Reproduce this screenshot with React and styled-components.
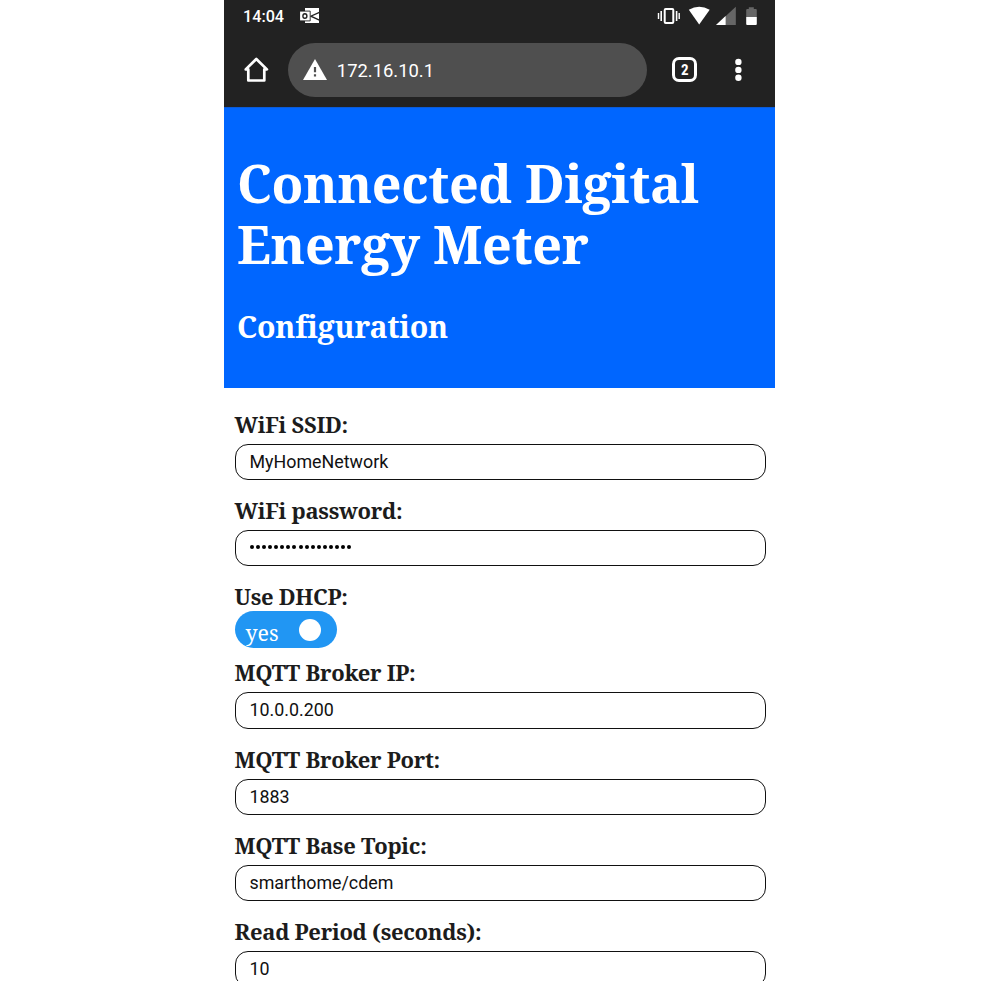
import React from "react";
import styled, { createGlobalStyle } from "styled-components";

const GlobalStyle = createGlobalStyle`
  * { box-sizing: border-box; }
  body { margin: 0; background: #fff; overflow: hidden; }
`;

const serif = `"Noto Serif", "Droid Serif", "DejaVu Serif Condensed", "DejaVu Serif", serif`;

const Phone = styled.main`
  width: 551px;
  height: 981px;
  margin: 0 auto 0 224px;
  overflow: hidden;
  background: #fff;
  font-family: Roboto, sans-serif;
`;

const Chrome = styled.header`
  height: 107px;
  background: #222;
  color: #fff;
`;

const StatusBar = styled.div`
  height: 33px;
  padding: 0 17px 0 19px;
  display: flex;
  align-items: center;
`;

const Clock = styled.span`
  width: 57px;
  font-size: 16.2px;
  font-weight: 500;
  line-height: 33px;
`;

const StatusIcons = styled.div`
  margin-left: auto;
  display: flex;
`;

const Toolbar = styled.div`
  height: 74px;
  padding: 10px 24px 10px 20px;
  display: flex;
  align-items: center;
`;

const AddressBar = styled.div`
  width: 359px;
  height: 54px;
  margin: 0 25px 0 19.3px;
  padding: 0 15px;
  display: flex;
  align-items: center;
  gap: 9.5px;
  border-radius: 27px;
  background: #4f4f4f;
`;

const Address = styled.span`
  font-size: 18.4px;
  line-height: 54px;
  padding-top: 1px;
`;

const TabCount = styled.div`
  width: 25px;
  height: 25px;
  margin: 0 36.5px 1px 0;
  display: grid;
  place-items: center;
  border: 3px solid #fff;
  border-radius: 7px;
  font: 700 15px/18px "Roboto Condensed", Roboto, sans-serif;
`;

const Banner = styled.section`
  height: 281px;
  padding: 44.4px 13px 0;
  background: #0066ff;
  border-top: 1px solid #0b5bd8;
  color: #fff;
  font-family: ${serif};
`;

const Title = styled.h1`
  margin: 0;
  font-size: 52px;
  font-weight: 700;
  line-height: 61px;
  letter-spacing: -0.34px;
`;

const Subtitle = styled.h2`
  margin: 33px 0 0;
  font-size: 30.2px;
  font-weight: 700;
  line-height: 40px;
  letter-spacing: -0.2px;
`;

const Form = styled.form`
  padding: 21.7px 9px 0 10.5px;
`;

const Field = styled.div`
  height: ${(p) => (p.$compact ? 76.4 : 86.2)}px;
`;

const Label = styled.label`
  display: block;
  height: ${(p) => (p.$compact ? 29 : 34)}px;
  color: #1c1c1c;
  font: 700 22px/28.6px ${serif};
  letter-spacing: -0.27px;
  white-space: nowrap;
`;

const Input = styled.div`
  height: 36.4px;
  padding: 0 14px;
  border: 1px solid #111;
  border-radius: 13px;
  color: #111;
  font-size: 17.85px;
  line-height: 34px;
`;

const Dots = styled.div`
  height: 32px;
  display: flex;
  align-items: center;
  gap: 2.07px;
  padding-left: 0.5px;

  i {
    width: 4px;
    height: 4px;
    border-radius: 50%;
    background: #000;
  }
`;

const Toggle = styled.div`
  width: 102px;
  height: 37px;
  padding: 0 16px 0 11px;
  display: flex;
  align-items: center;
  justify-content: space-between;
  border-radius: 18.5px;
  background: #2196f3;
  color: #fff;
  font: 400 21.3px/28px ${serif};
`;

const ToggleText = styled.span`
  padding-top: 7px;
`;

const Knob = styled.span`
  width: 22px;
  height: 22px;
  margin-top: 1px;
  border-radius: 50%;
  background: #fff;
`;

const fields = [
  { label: "WiFi SSID:", value: "MyHomeNetwork" },
  { label: "WiFi password:", masked: 17 },
  { label: "Use DHCP:", toggle: "yes" },
  { label: "MQTT Broker IP:", value: "10.0.0.200" },
  { label: "MQTT Broker Port:", value: "1883" },
  { label: "MQTT Base Topic:", value: "smarthome/cdem" },
  { label: "Read Period (seconds):", value: "10" },
];

const OutlookIcon = () => (
  <svg width="20" height="17" viewBox="0 0 20 17">
    <path d="M5 0h14v15H5z" fill="#fff" />
    <path d="M19.4 4.4L10.8 8.2L19.4 12.2" fill="none" stroke="#222" strokeWidth="1.3" />
    <path d="M-.4 3.1h10.6v9.8H-.4z" fill="#fff" stroke="#222" strokeWidth=".9" />
    <ellipse cx="4.9" cy="8" rx="2" ry="2.3" fill="none" stroke="#222" strokeWidth="1.4" />
  </svg>
);

const PhoneStatus = () => (
  <svg width="102" height="23" viewBox="656 5 102 23" fill="#fff">
    <path d="M657.8 13h1.4v6h-1.4zM660.4 11h1.6v10h-1.6zM675.8 11h1.6v10h-1.6zM678.5 13h1.4v6h-1.4z" />
    <rect x="664.7" y="8.9" width="8.6" height="14.2" rx="1" fill="none" stroke="#fff" strokeWidth="2" />
    <path d="M688.8 9.7Q699.2 3.9 709.7 9.7L699.2 24.6z" />
    <path d="M735.8 6.8V24.9H716z" fill="#666" />
    <path d="M725.6 16V24.9H716z" />
    <path d="M746.2 10q0-1 1-1h1.6V7.2h5V9h2q1 0 1 1v7h-10.6z" fill="#666" />
    <path d="M746.2 16.9h10.6V24q0 1-1 1h-8.6q-1 0-1-1z" />
  </svg>
);

const HomeIcon = () => (
  <svg width="25" height="26" viewBox="0 0 25 26" fill="none" stroke="#fff" strokeWidth="2.7" strokeLinejoin="round">
    <path d="M4.3 12.4H1.7L12.3 2L22.9 12.4H20.3V23.5H4.3z" />
  </svg>
);

const WarningIcon = () => (
  <svg width="24" height="23" viewBox="0 0 24 23">
    <path d="M12 0L24 21H0z" fill="#fff" />
    <path d="M10.9 8h2.2v5.2h-2.2zM10.9 15.2h2.2v2.3h-2.2z" fill="#4f4f4f" />
  </svg>
);

const MenuIcon = () => (
  <svg width="8" height="24" viewBox="0 0 8 24" fill="#fff">
    <circle cx="4.4" cy="3.9" r="3.2" />
    <circle cx="4.4" cy="11.9" r="3.2" />
    <circle cx="4.4" cy="19.8" r="3.2" />
  </svg>
);

function FieldControl({ field }) {
  if (field.toggle) {
    return (
      <Toggle role="switch" aria-checked="true">
        <ToggleText>{field.toggle}</ToggleText>
        <Knob />
      </Toggle>
    );
  }
  if (field.masked) {
    return (
      <Input>
        <Dots>
          {Array.from({ length: field.masked }, (_, i) => (
            <i key={i} />
          ))}
        </Dots>
      </Input>
    );
  }
  return <Input>{field.value}</Input>;
}

export default function App() {
  return (
    <>
      <GlobalStyle />
      <Phone>
        <Chrome>
          <StatusBar>
            <Clock>14:04</Clock>
            <OutlookIcon />
            <StatusIcons>
              <PhoneStatus />
            </StatusIcons>
          </StatusBar>
          <Toolbar>
            <HomeIcon />
            <AddressBar>
              <WarningIcon />
              <Address>172.16.10.1</Address>
            </AddressBar>
            <TabCount>2</TabCount>
            <MenuIcon />
          </Toolbar>
        </Chrome>
        <Banner>
          <Title>Connected Digital Energy Meter</Title>
          <Subtitle>Configuration</Subtitle>
        </Banner>
        <Form>
          {fields.map((field) => (
            <Field key={field.label} $compact={!!field.toggle}>
              <Label $compact={!!field.toggle}>{field.label}</Label>
              <FieldControl field={field} />
            </Field>
          ))}
        </Form>
      </Phone>
    </>
  );
}
